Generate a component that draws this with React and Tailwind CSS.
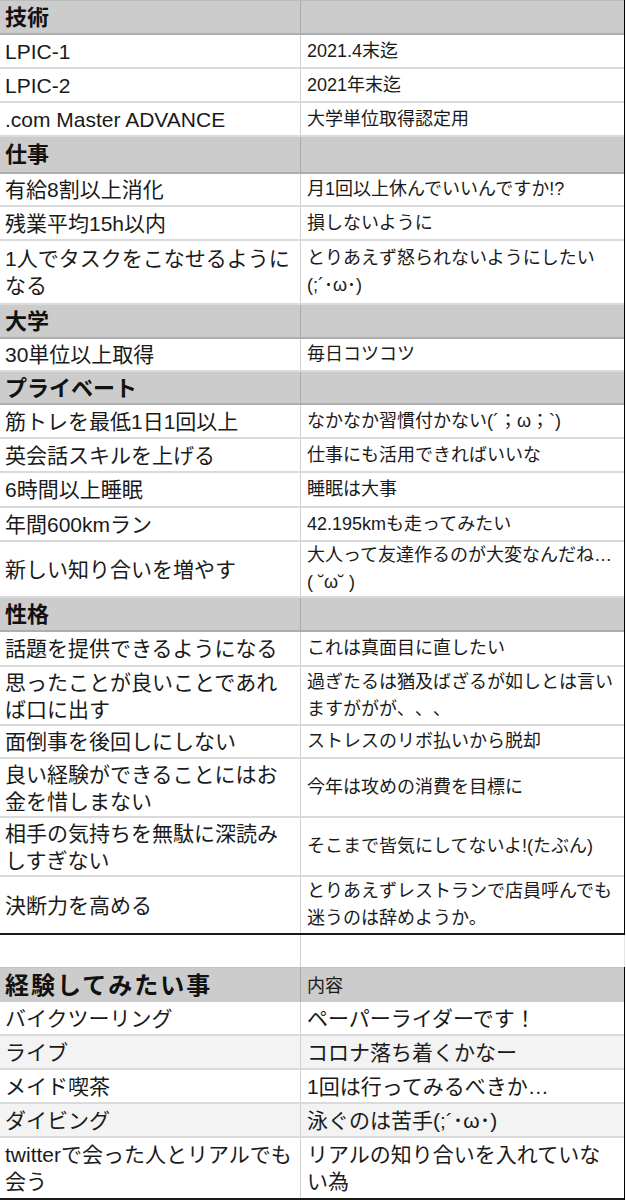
import React from 'react';

const font = "font-['Liberation_Sans','Noto_Sans_CJK_JP',sans-serif]";

// [left, right, height]; arrays mean forced line breaks
const goals = [
  { head: '技術', h: 35, first: true },
  ['LPIC-1', '2021.4末迄', 34],
  ['LPIC-2', '2021年末迄', 34],
  ['.com Master ADVANCE', '大学単位取得認定用', 34],
  { head: '仕事', h: 37 },
  ['有給8割以上消化', '月1回以上休んでいいんですか!?', 33],
  ['残業平均15h以内', '損しないように', 34],
  [['1人でタスクをこなせるように', 'なる'], ['とりあえず怒られないようにしたい', '(;´･ω･)'], 64],
  { head: '大学', h: 34 },
  ['30単位以上取得', '毎日コツコツ', 33],
  { head: 'プライベート', h: 33 },
  ['筋トレを最低1日1回以上', 'なかなか習慣付かない(´；ω；`)', 34],
  ['英会話スキルを上げる', '仕事にも活用できればいいな', 34],
  ['6時間以上睡眠', '睡眠は大事', 35],
  ['年間600kmラン', '42.195kmも走ってみたい', 34],
  ['新しい知り合いを増やす', ['大人って友達作るのが大変なんだね…', '( ˘ω˘ )'], 56],
  { head: '性格', h: 34 },
  ['話題を提供できるようになる', 'これは真面目に直したい', 35],
  [['思ったことが良いことであれ', 'ば口に出す'], ['過ぎたるは猶及ばざるが如しとは言い', 'ますががが、、、'], 59],
  ['面倒事を後回しにしない', 'ストレスのリボ払いから脱却', 33],
  [['良い経験ができることにはお', '金を惜しまない'], '今年は攻めの消費を目標に', 59],
  [['相手の気持ちを無駄に深読み', 'しすぎない'], 'そこまで皆気にしてないよ!(たぶん)', 59],
  ['決断力を高める', ['とりあえずレストランで店員呼んでも', '迷うのは辞めようか。'], 58, true],
];

const wishes = [
  ['バイクツーリング', 'ペーパーライダーです！', 34],
  ['ライブ', 'コロナ落ち着くかなー', 34],
  ['メイド喫茶', '1回は行ってみるべきか…', 34],
  ['ダイビング', '泳ぐのは苦手(;´･ω･)', 34],
  [['twitterで会った人とリアルでも', '会う'], ['リアルの知り合いを入れていな', 'い為'], 62, true],
];

function Lines({ text }) {
  if (!Array.isArray(text)) return text;
  return text.map((l, i) => (
    <span key={i} className="block">{l}</span>
  ));
}

function HeadRow({ label, h, first }) {
  return (
    <div
      className={`grid grid-cols-[301px_1fr] bg-[#cccccc] border-b-2 border-[#aeaeae] ${first ? 'border-t border-t-[#bcbcbc]' : ''}`}
      style={{ height: h }}
    >
      <div className="flex items-center pl-[5px] border-r border-[#acacac] text-[22px] font-bold text-[#111]">{label}</div>
      <div />
    </div>
  );
}

function Row({ left, right, h, last, big, shade }) {
  return (
    <div
      className={`grid grid-cols-[301px_1fr] ${last ? 'border-b-2 border-[#1a1a1a]' : 'border-b-2 border-[#dadada]'} ${shade ? 'bg-[#f3f3f3]' : 'bg-white'}`}
      style={{ height: h }}
    >
      <div className="flex items-center pl-[5px] border-r border-[#cfcfcf] text-[21px] leading-[27px] text-[#1a1a1a] whitespace-nowrap">
        <div><Lines text={left} /></div>
      </div>
      <div className={`flex items-center pl-[6px] text-[#1a1a1a] whitespace-nowrap ${big ? 'text-[21px] leading-[27px]' : 'text-[18px] leading-[27px]'}`}>
        <div><Lines text={right} /></div>
      </div>
    </div>
  );
}

export default function App() {
  return (
    <div className={`w-[626px] h-[1200px] bg-white overflow-hidden [text-spacing-trim:space-all] ${font}`}>
      <div className="w-[625px] border-r border-black">
        {goals.map((r, i) =>
          r.head ? (
            <HeadRow key={i} label={r.head} h={r.h} first={r.first} />
          ) : (
            <Row key={i} left={r[0]} right={r[1]} h={r[2]} last={r[3]} />
          )
        )}
      </div>

      <div className="w-[625px] h-[32px] grid grid-cols-[301px_1fr] border-r border-[#e4e4e4]">
        <div className="border-r border-[#cfcfcf]" />
        <div />
      </div>

      <div className="w-[625px] border-r border-black">
        <div className="grid grid-cols-[301px_1fr] bg-[#cccccc] h-[35px] border-t border-[#c2c2c2]">
          <div className="flex items-center pl-[5px] border-r border-[#acacac] text-[24px] tracking-[2px] font-bold text-[#111]">経験してみたい事</div>
          <div className="flex items-center pl-[6px] text-[18px] text-[#1a1a1a]">内容</div>
        </div>
        {wishes.map((r, i) => (
          <Row key={i} left={r[0]} right={r[1]} h={r[2]} last={r[3]} big shade={i % 2 === 1} />
        ))}
      </div>
    </div>
  );
}
